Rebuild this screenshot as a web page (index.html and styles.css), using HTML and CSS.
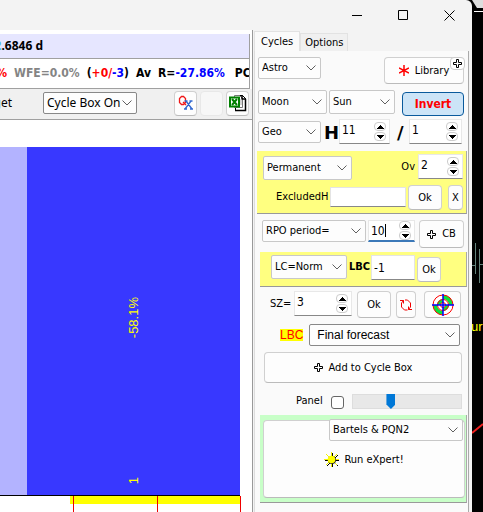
FILE: index.html
```html
<!DOCTYPE html>
<html lang="en">
<head>
<meta charset="utf-8">
<title>Cycles</title>
<link rel="stylesheet" href="styles.css">
</head>
<body>
<svg class="defs" width="0" height="0" aria-hidden="true">
  <symbol id="chev" viewBox="0 0 10 6"><path d="M.5.5L5 5 9.500.5" fill="none" stroke="#606060"/></symbol>
  <symbol id="up" viewBox="0 0 7 4"><path d="M3 0h1v1h1v1h1v1h1v1H0V3h1V2h1V1h1z"/></symbol>
  <symbol id="down" viewBox="0 0 7 4"><path d="M0 0h7v1H6v1H5v1H4v1H3V3H2V2H1V1H0z"/></symbol>
  <symbol id="plus" viewBox="0 0 9 9"><path d="M3.5.5h2v3h3v2h-3v3h-2v-3h-3v-2h3z" fill="#fff" stroke="#000"/></symbol>
</svg>
<div class="screen">
  <div class="window">
    <header class="titlebar">
      <button aria-label="Minimize"><svg width="11" height="11"><path d="M0 5.5h10" stroke="#000"/></svg></button>
      <button aria-label="Maximize"><svg width="11" height="11"><path d="M.5.5h9v9h-9z" fill="none" stroke="#000"/></svg></button>
      <button aria-label="Close"><svg width="11" height="11"><path d="M.5.5l10 10M10.500 .5l-10 10" stroke="#000" fill="none"/></svg></button>
    </header>
    <div class="content">
      <main class="main">
        <div class="period"><span><i>2</i>.6846 d</span></div>
        <div class="stats"><span class="red first">%</span><span class="grey">WFE=0.0%</span><span>(<b class="red">+0/</b><b class="blue">-3</b>)</span><span>Av</span><span>R=<b class="blue">-27.86%</b></span><span class="pc">PC</span></div>
        <div class="toolbar">
          <label for="target">get</label>
          <div class="combo target"><select id="target"><option>Cycle Box On</option></select><svg class="chev"><use href="#chev"/></svg></div>
          <button class="btn tool" aria-label="QX"><svg width="16" height="16" fill="none"><path d="M3.500 1.500h2l2 2v4l-2 2h-2l-2-2v-4zM5 7l3 3" stroke="#f01818" stroke-width="1.300"/><path d="M8 6l6 8M13 6l-6 8M6.500 6h3M11.500 6h3M6 14h3M12 14h3" stroke="#3268d0" stroke-width="1.300"/></svg></button>
          <button class="btn tool blank" aria-label="Empty"></button>
          <button class="btn tool" aria-label="Export to Excel"><svg width="18" height="18"><path d="M8.500 1.500h5l3 3v12h-10v-3" fill="#fff" stroke="#000"/><path d="M5.500 3V1.500h5l3 3v9H5.500z" fill="#fff" stroke="#777"/><path d="M13 1v4h4M16.500 5v11.500H6" fill="none" stroke="#000" stroke-width="1.500"/><path d="M10 6h3M10 8h3M10 10h3" stroke="#aaa"/><path d="M1 3.500h9v9H1z" fill="#fff" stroke="#008000" stroke-width="2"/><path d="M3 5l5 6M8 5l-5 6" stroke="#008000" stroke-width="2"/></svg></button>
        </div>
        <div class="chart">
          <div class="bars">
            <div class="bar-light"></div>
            <div class="bar-dark"><span>-58.1%</span><span class="idx">1</span></div>
          </div>
          <div class="axis"><div class="mark"></div></div>
        </div>
      </main>
      <aside class="side">
        <nav class="tabs"><button class="tab on">Cycles</button><button class="tab">Options</button></nav>
        <div class="pane">
          <div class="row r1">
            <div class="combo w63"><select aria-label="Type"><option>Astro</option></select><svg class="chev"><use href="#chev"/></svg></div>
            <div class="library"><button class="btn"><svg width="10" height="11"><path d="M5 0v11M0 3l10 5M10 3L0 8" stroke="red" stroke-width="1.500"/></svg>Library</button>
            <button class="badge" aria-label="Add"><svg width="9" height="9"><use href="#plus"/></svg></button></div>
          </div>
          <div class="row r2">
            <div class="combo w69"><select aria-label="First body"><option>Moon</option></select><svg class="chev"><use href="#chev"/></svg></div>
            <div class="combo w66"><select aria-label="Second body"><option>Sun</option></select><svg class="chev"><use href="#chev"/></svg></div>
            <button class="btn invert">Invert</button>
          </div>
          <div class="row r3">
            <div class="combo w63"><select aria-label="Center"><option>Geo</option></select><svg class="chev"><use href="#chev"/></svg></div>
            <label class="big" for="h">H</label>
            <div class="spin w51"><input id="h" value="11"><span><button aria-label="Up"><svg><use href="#up"/></svg></button><button aria-label="Down"><svg><use href="#down"/></svg></button></span></div>
            <label class="big slash" for="d">/</label>
            <div class="spin w53"><input id="d" value="1"><span><button aria-label="Up"><svg><use href="#up"/></svg></button><button aria-label="Down"><svg><use href="#down"/></svg></button></span></div>
          </div>
          <section class="box perm">
            <div class="row">
              <div class="combo w89"><select aria-label="Mode"><option>Permanent</option></select><svg class="chev"><use href="#chev"/></svg></div>
              <label class="push" for="ov">Ov</label>
              <div class="spin w45"><input id="ov" value="2"><span><button aria-label="Up"><svg><use href="#up"/></svg></button><button aria-label="Down"><svg><use href="#down"/></svg></button></span></div>
            </div>
            <div class="row excl">
              <label for="ex">ExcludedH</label>
              <input class="field" id="ex">
              <button class="btn w34">Ok</button>
              <button class="btn w15">X</button>
            </div>
          </section>
          <div class="row rpo">
            <div class="combo w104"><select aria-label="Period kind"><option>RPO period=</option></select><svg class="chev"><use href="#chev"/></svg></div>
            <div class="spin w47 focus"><input aria-label="Period" value="10"><i class="caret"></i><span><button aria-label="Up"><svg><use href="#up"/></svg></button><button aria-label="Down"><svg><use href="#down"/></svg></button></span></div>
            <button class="btn cb"><svg width="9" height="9"><use href="#plus"/></svg>CB</button>
          </div>
          <section class="box norm">
            <div class="row">
              <div class="combo w76"><select aria-label="LC"><option>LC=Norm</option></select><svg class="chev"><use href="#chev"/></svg></div>
              <label class="bold" for="lbc">LBC</label>
              <input class="field w44" id="lbc" value="-1">
              <button class="btn w24">Ok</button>
            </div>
          </section>
          <div class="row sz">
            <label for="sz">SZ=</label>
            <div class="spin w58"><input id="sz" value="3"><span><button aria-label="Up"><svg><use href="#up"/></svg></button><button aria-label="Down"><svg><use href="#down"/></svg></button></span></div>
            <button class="btn w34">Ok</button>
            <button class="btn w19" aria-label="Refresh"><svg width="12" height="12" fill="none" stroke="#f00000"><path d="M0 1.500h3.500v3M3.500 1.500L1.500 4v4l3 3h3M12 10.500H8.500v-3M8.500 10.500l2-2.500V4l-3-3H5"/></svg></button>
            <button class="btn w37" aria-label="Wheel"><svg width="22" height="22" fill="none"><circle cx="11" cy="11" r="10" fill="#fff"/><path d="M11 1a10 10 0 0 1 10 10h-4a6 6 0 0 0-6-6zM11 21A10 10 0 0 1 1 11h4a6 6 0 0 0 6 6z" fill="#0be03a"/><path d="M11 11V5a6 6 0 0 0-6 6zM11 11v6a6 6 0 0 0 6-6z" fill="#0be03a"/><g stroke="red"><circle cx="11" cy="11" r="10"/><circle cx="11" cy="11" r="5.500"/><circle cx="11" cy="11" r="2.500" fill="#fff"/></g><path d="M11 0v22M0 11h22" stroke="#0000ff" stroke-width="1.500"/></svg></button>
          </div>
          <div class="row fc">
            <label for="fc">LBC</label>
            <div class="combo forecast"><select id="fc"><option>Final forecast</option></select><svg class="chev"><use href="#chev"/></svg></div>
          </div>
          <button class="btn add"><svg width="9" height="9"><use href="#plus"/></svg>Add to Cycle Box</button>
          <div class="row panelrow">
            <label for="panel">Panel</label>
            <input type="checkbox" id="panel">
            <input type="range" aria-label="Panel level" min="0" max="100" value="34">
          </div>
          <section class="box expert">
            <button class="btn run"><svg width="16" height="16"><path d="M8.500 1v14M1 8.500h14M3 3l11 11M14 3L3 14" stroke="#000"/><path d="M7.500 0v15M0 7.500h15M2 2l11 11M13 2L2 13" stroke="#f4f400"/><circle cx="8" cy="8" r="4" fill="#222"/><circle cx="7.500" cy="7.500" r="3.800" fill="#ff0"/></svg>Run eXpert!</button>
            <div class="combo bartels"><select aria-label="Test"><option>Bartels &amp; PQN2</option></select><svg class="chev"><use href="#chev"/></svg></div>
          </section>
        </div>
      </aside>
    </div>
  </div>
  <svg class="desktop" width="11" height="512" viewBox="0 0 11 512">
    <path d="M0 0h11v8H5z" fill="#ddd"/><path d="M2 11.500h9" stroke="#fff"/>
    <path d="M3.500 243v31M7.500 249v34M0 265.500h4M8 264.500h3" stroke="#64837c"/>
    <text x="-1" y="331">ur</text>
    <path d="M0 433l11-9" stroke="#f02020" stroke-width="2"/>
  </svg>
</div>
</body>
</html>
```

FILE: styles.css
```css
*, *::before, *::after { box-sizing: border-box; }
body { margin: 0; background: #000; color: #000; font: 11px/14px "DejaVu Sans Condensed", "Noto Sans", sans-serif; }
button, input, select { font: inherit; color: inherit; margin: 0; padding: 0; }
svg { display: block; flex: none; }
.defs { position: absolute; }
.screen { display: flex; min-height: 100vh; }
.window { flex: 1; min-width: 0; display: flex; flex-direction: column; background: #f3f3f3; border-top-right-radius: 6px; }
.desktop { overflow: hidden; }
.desktop text { font: 13px "Liberation Sans", sans-serif; fill: #ff0; }
.titlebar { height: 30px; display: flex; justify-content: flex-end; align-items: center; }
.titlebar button { width: 46px; height: 28px; border: 0; background: none; display: flex; justify-content: center; align-items: center; }
.content { flex: 1; display: flex; }

.main { flex: 1; min-width: 0; background: #fff; display: flex; flex-direction: column; padding-top: 4px; }
.period { height: 25px; margin-right: 2px; background: #e6e6ff; border-bottom: 1px solid #a0a0a0; border-right: 1px solid #a0a0a0; overflow: hidden; }
.period span { width: 43px; display: flex; justify-content: flex-end; font: bold 12px/24px "Noto Sans", sans-serif; white-space: pre; }
.period i { font-style: normal; color: #4bb8e8; }
.stats { height: 30px; margin-right: 2px; border-bottom: 1px solid #a0a0a0; border-right: 1px solid #a0a0a0; display: flex; gap: 7px; overflow: hidden; font: bold 12px/28px "DejaVu Sans Condensed", sans-serif; white-space: nowrap; }
.stats .first { width: 7px; display: flex; justify-content: flex-end; }
.stats .pc { margin-left: 3px; }
.red { color: #f00; } .blue { color: #00f; } .grey { color: #848484; }
.toolbar { height: 31px; background: #f0f0f0; border-bottom: 1px solid #a0a0a0; display: flex; align-items: center; padding: 0 3px 2px 0; font: 12px/16px "Noto Sans", sans-serif; }
.toolbar label { width: 12px; display: flex; justify-content: flex-end; margin-right: 31px; }
.toolbar .target { width: 94px; margin-right: auto; border-color: #888; }
.tool { width: 23px; height: 25px; margin-left: 3px; }
.tool.blank { border-color: #e8e8e8; background: #f7f7f7; }
.chart { flex: 1; display: flex; flex-direction: column; padding: 27px 12px 0 0; }
.bars { flex: 1; display: flex; }
.bar-light { width: 27px; background: #b3b3ff; }
.bar-dark { flex: 1; background: #3838ff; color: #ff0; font: 13px/14px "Liberation Sans", sans-serif; display: flex; flex-direction: column; align-items: center; justify-content: flex-end; padding-bottom: 11px; }
.bar-dark span { writing-mode: vertical-rl; transform: rotate(180deg); }
.bar-dark .idx { margin-top: 139px; }
.axis { height: 17px; border-top: 1px solid #000; display: flex; justify-content: flex-end; }
.mark { width: 171px; margin-right: -1px; background: linear-gradient(#ff0, #ff0) 0 0 / 100% 8px no-repeat; display: flex; }
.mark::before { content: ""; width: 85px; margin-left: 3px; border-left: 1px solid #e00; border-right: 1px solid #e00; }
.mark::after { content: ""; flex: 1; border-right: 1px solid #e00; }

.side { width: 220px; border-left: 1px solid #999; background: #f3f3f3; display: flex; flex-direction: column; padding: 1px 0 0 1px; }
.tabs { display: flex; align-items: flex-end; height: 20px; flex: none; }
.tab { border: 1px solid #e2e2e2; border-bottom: 0; background: #f0f0f0; height: 18px; padding: 0 4px; }
.tab.on { background: #fafafa; height: 20px; padding: 0 6px; }
.pane { flex: 1; background: #fafafa; border-right: 1px solid #aaa; margin-right: 3px; padding: 6px 2px 0 4px; box-shadow: inset 1px 0 #ddd; }
.row { display: flex; }
.row label { white-space: nowrap; }

.combo { position: relative; flex: none; height: 22px; border: 1px solid #c8c8c8; border-radius: 2px; background: #fdfdfd; }
.combo select { appearance: none; width: 100%; height: 100%; border: 0; background: none; padding-left: 3px; display: block; }
.chev { position: absolute; right: 4px; top: 50%; margin-top: -3px; width: 10px; height: 6px; pointer-events: none; }
.btn { border: 1px solid #d0d0d0; border-bottom-color: #bbb; border-radius: 4px; background: #fdfdfd; display: flex; align-items: center; justify-content: center; gap: 6px; flex: none; white-space: nowrap; }
.spin { position: relative; display: flex; align-items: center; flex: none; height: 25px; border: 1px solid #e8e8e8; border-bottom-color: #888; background: #fff; padding-right: 3px; }
.spin input { flex: 1; min-width: 0; width: 0; height: 20px; align-self: flex-start; border: 0; background: none; padding-left: 2px; outline: 0; font-size: 12px; }
.spin span { display: grid; gap: 1px; }
.spin button { width: 12px; height: 9px; border: 1px solid #ccc; border-radius: 4px; background: #fff; display: grid; place-items: center; }
.spin svg { width: 7px; height: 4px; }
.focus { border-bottom: 2px solid #3b78b8; }
.caret { position: absolute; left: 16px; top: 3px; height: 13px; border-left: 1px solid #000; }
.field { border: 1px solid #e4e4e4; border-bottom-color: #888; background: #fff; border-radius: 0; padding-left: 2px; font-size: 12px; }

.w15 { width: 15px; } .w19 { width: 20px; } .w24 { width: 24px; } .w34 { width: 34px; } .w37 { width: 37px; }
.w44 { width: 44px; } .w45 { width: 45px; } .w47 { width: 47px; } .w51 { width: 51px; } .w53 { width: 53px; } .w58 { width: 58px; }
.w63 { width: 63px; } .w66 { width: 66px; } .w69 { width: 69px; } .w76 { width: 76px; } .w89 { width: 89px; } .w104 { width: 104px; }

.r1 { justify-content: space-between; height: 33px; padding-right: 2px; }
.library { position: relative; width: 80px; height: 27px; }
.library .btn { width: 100%; height: 100%; }
.library .badge { position: absolute; top: 0; right: -1px; width: 15px; height: 13px; border: 1px solid #ccc; border-radius: 4px; background: #fff; display: grid; place-items: center; }
.r2 { gap: 2px; height: 29px; }
.r2 .combo { height: 24px; }
.invert { width: 62px; height: 24px; margin: 2px 2px 0 auto; background: #cce4f7; border-color: #0a5a9c; color: #f00; font: bold 12px/16px "DejaVu Sans Condensed", sans-serif; }
.r3 { height: 32px; }
.r3 .combo { margin-top: 2px; }
.big { font: bold 18px/28px "DejaVu Sans", sans-serif; width: 18px; padding-left: 3px; }
.slash { width: 19px; padding-left: 7px; }

.box { border-bottom: 1px solid #999; border-right: 1px solid #aaa; background: #ffff80; margin-right: -1px; }
.perm { height: 63px; margin-left: -1px; padding: 3px 3px 0 6px; }
.perm .combo { margin-top: 2px; height: 24px; }
.push { margin: 6px 3px 0 auto; }
.excl { margin-top: 5px; padding-left: 13px; gap: 2px; }
.excl label { margin: 5px 0 0; }
.excl .field { flex: 1; min-width: 0; height: 20px; margin-top: 2px; }
.excl .btn { height: 25px; }
.excl .w15 { margin-left: 4px; }
.rpo { gap: 2px; padding: 6px 2px 0 4px; height: 38px; }
.rpo .spin { height: 22px; }
.cb { width: 45px; height: 28px; margin-left: auto; }
.norm { height: 35px; margin-left: 2px; padding: 3px 0 0 11px; }
.norm .combo { height: 24px; margin-right: 2px; }
.norm .bold { width: 22px; font-weight: bold; line-height: 24px; }
.norm .field { height: 25px; margin-right: 2px; }
.norm .btn { height: 25px; margin-top: 2px; }
.sz { padding: 4px 5px 0 12px; height: 37px; gap: 5px; }
.sz label { width: 19px; line-height: 26px; }
.sz .btn { height: 27px; }
.sz .w37 { margin-left: auto; }
.fc { padding: 0 6px 0 22px; height: 28px; gap: 6px; font: 12px/14px "Liberation Sans", sans-serif; }
.fc label { color: #f00; background: #ff0; height: 12px; line-height: 12px; margin-top: 5px; }
.forecast { flex: 1; border-color: #888; }
.forecast select { padding-left: 7px; }
.add { width: calc(100% - 10px); margin: 0 4px 0 6px; height: 31px; }
.panelrow { padding: 11px 4px 0 38px; height: 32px; gap: 8px; align-items: flex-start; }
.panelrow input { appearance: none; border: 1px solid #666; border-radius: 3px; width: 13px; height: 13px; margin-top: 2px; background: #fff; flex: none; }
.panelrow input[type=range] { flex: 1; min-width: 0; width: 0; height: 15px; margin-top: 0; border: 1px solid #ddd; border-radius: 0; background: #e8e8e8; }
.panelrow input::-webkit-slider-thumb { appearance: none; width: 9px; height: 15px; background: #0078d7; clip-path: polygon(0 0, 100% 0, 100% 70%, 50% 100%, 0 70%); }
.expert { position: relative; height: 88px; margin-left: 2px; padding: 5px 1px 4px 3px; background: #c8ffc8; }
.run { width: 100%; height: 100%; gap: 4px; padding-top: 2px; }
.bartels { position: absolute; right: 3px; top: 4px; width: 134px; }
```
